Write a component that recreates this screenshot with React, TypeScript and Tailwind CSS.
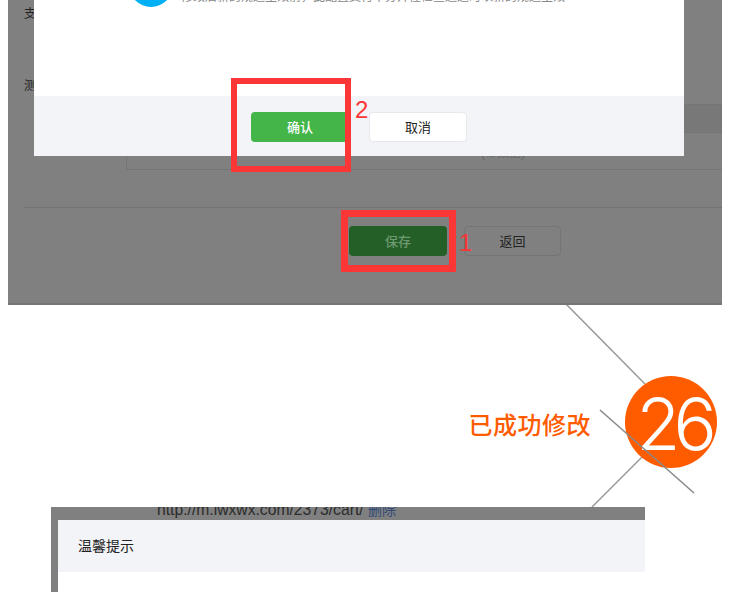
const cjk = "font-['Liberation_Sans','Noto_Sans_CJK_SC',sans-serif]";

function Backdrop() {
  return (
    <div className="relative ml-2 flex h-[305px] w-[714px] flex-col overflow-hidden border-b-2 border-[#757575] bg-[#808080] pl-4 pt-[6px]">
      <span className="text-xs leading-4 text-[#222]">支</span>
      <span className="mt-14 text-xs leading-4 text-[#222]">测</span>
      {/* table behind the dialog */}
      <div className="ml-[102px] mt-[10px] h-[66px] border border-r-0 border-[#757575]">
        <div className="h-7 border-b border-[#757575] bg-[#787878]" />
        <p className="mt-3 pl-[354px] text-xs text-[#666]">(带数据)</p>
      </div>
      <div className="mt-[37px] border-t border-[#747474]" />
      <div className="mt-[18px] flex gap-[17px] pl-[325px]">
        <button className="h-[30px] w-[98px] rounded-sm bg-[#235f26] pt-[1px] text-[13px] font-medium text-[#6f9a72]">保存</button>
        <button className="h-[30px] w-[97px] rounded-sm border border-[#757575] pt-[1px] text-[13px] text-[#222]">返回</button>
      </div>
      <Modal />
      <div className="absolute left-[223px] top-[78px] h-[94px] w-[120px] border-[6px] border-[#fb3636]" />
      <div className="absolute left-[333px] top-[210px] h-[62px] w-[115px] border-[7px] border-[#fb3636]" />
      <span className="absolute left-[347px] top-[94px] text-2xl text-[#fb3636]">2</span>
      <span className="absolute left-[451px] top-[227px] text-2xl text-[#fb3636]">1</span>
    </div>
  );
}

function Modal() {
  return (
    <div className="absolute left-[26px] top-0 flex h-[156px] w-[650px] flex-col overflow-hidden bg-white">
      <div className="flex h-24 items-start gap-[8px] pl-[95px]">
        <div className="-mt-[37px] h-11 w-11 rounded-full bg-[#00b0f5]" />
        <p className="-mt-[11px] whitespace-nowrap text-xs text-[#888]">
          修改后新的规避生效前，此配置支付不分开性检查通过时以新的规避生效
        </p>
      </div>
      <div className="flex flex-1 items-center justify-center gap-[20px] bg-[#f3f4f8] pt-[2px]">
        <button className="h-[30px] w-[98px] rounded-sm bg-[#43b549] pt-[1px] text-[13px] font-medium text-white">确认</button>
        <button className="h-[30px] w-[98px] rounded-sm border border-[#e8e8ec] bg-white pt-[1px] text-[13px] text-[#222]">取消</button>
      </div>
    </div>
  );
}

function Badge() {
  return (
    <div className="relative flex h-[202px] items-start justify-end gap-[34px] pr-[17px] pt-[71px]">
      <svg className="absolute left-0 top-0" width="734" height="202" viewBox="0 305 734 202">
        <line x1="566" y1="304" x2="645" y2="384" stroke="#999" strokeWidth="1.5" />
        <line x1="647" y1="452" x2="592" y2="507" stroke="#999" strokeWidth="1.5" />
      </svg>
      <span className="relative mt-[32px] text-[24px] font-medium tracking-[0.5px] text-[#ff5c00]">已成功修改</span>
      <div className="relative flex h-[92px] w-[92px] items-center justify-center rounded-full bg-[#ff5c00]">
        <span className="ml-[4px] mt-[4px] font-['Inter',sans-serif] text-[72px] leading-none font-light tracking-[-7px] text-white">26</span>
      </div>
      <svg className="absolute left-0 top-0" width="734" height="202" viewBox="0 305 734 202">
        <line x1="600" y1="410" x2="694" y2="493" stroke="#888" strokeWidth="1.5" />
      </svg>
    </div>
  );
}

function Hint() {
  return (
    <div className="ml-[51px] flex h-[85px] w-[594px] flex-col overflow-hidden bg-[#808080] pl-[7px]">
      <div className="flex h-[13px] items-end pl-[99px]">
        <p className="whitespace-nowrap text-[15.7px] leading-5 text-[#2c2c2c]">
          http://m.iwxwx.com/2373/cart/ <span className="text-sm text-[#2f4a75]">删除</span>
        </p>
      </div>
      <div className="flex h-[52px] items-center bg-[#f3f4f8] pl-5 text-sm text-[#222]">温馨提示</div>
      <div className="flex-1 bg-white" />
    </div>
  );
}

export default function App() {
  return (
    <div className={`h-[592px] w-[734px] overflow-hidden bg-white ${cjk}`}>
      <Backdrop />
      <Badge />
      <Hint />
    </div>
  );
}
